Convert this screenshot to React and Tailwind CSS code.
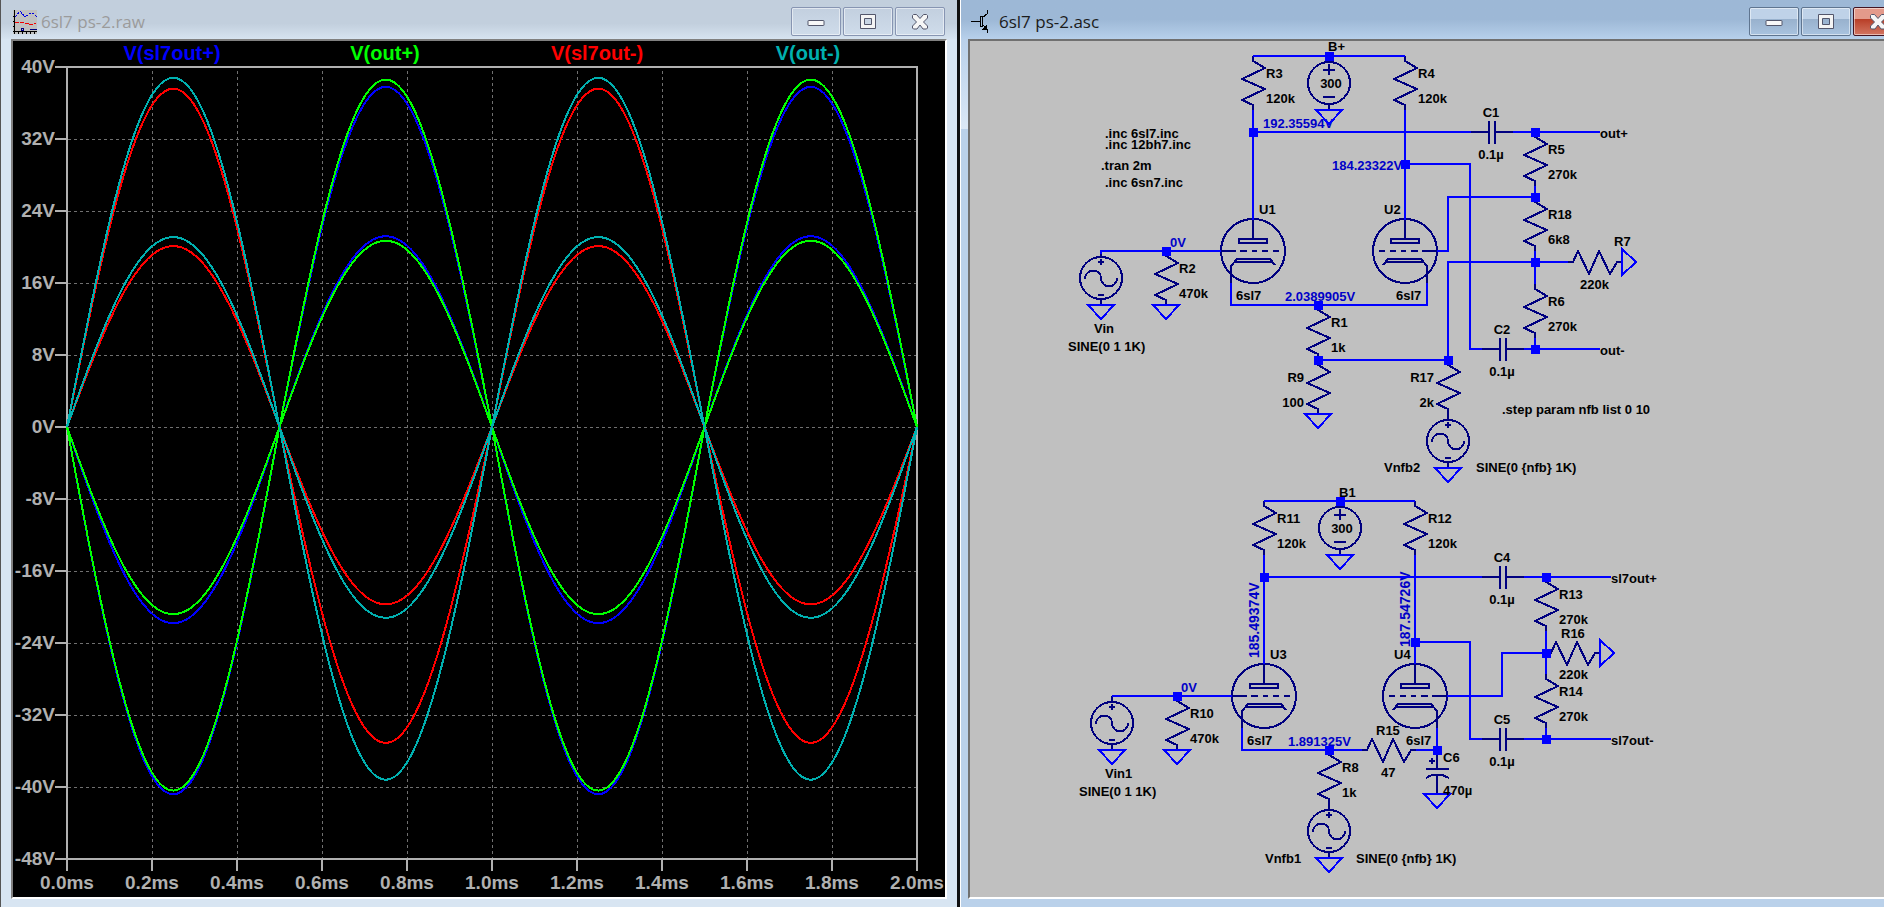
import { clsx } from 'clsx';

const WIRE = '#0000ff';
const SYMBOL = '#000080';
const VOLTAGE = '#0000c8';

// ---------- waveform data ----------
// each trace has one curve per step of the nfb parameter: [first peak, second peak] in volts
const traces = [
  { name: 'V(sl7out+)', x: 172, color: '#0000ff', curves: [[-40.8, 37.8], [-21.8, 21.2]] },
  { name: 'V(out+)', x: 385, color: '#00ff00', curves: [[-40.4, 38.6], [-20.8, 20.7]] },
  { name: 'V(sl7out-)', x: 597, color: '#ff0000', curves: [[37.6, -35.1], [20.1, -19.7]] },
  { name: 'V(out-)', x: 808, color: '#00b0b0', curves: [[38.8, -39.2], [21.1, -21.2]] },
];

const volts = [40, 32, 24, 16, 8, 0, -8, -16, -24, -32, -40, -48];
const times = [0, 0.2, 0.4, 0.6, 0.8, 1.0, 1.2, 1.4, 1.6, 1.8, 2.0];

const tx = (t) => Math.round(67 + t * 425);
const vy = (v) => 427 - v * 9;

const sinePoints = ([first, second]) => {
  const pts = [];
  for (let i = 0; i <= 200; i++) {
    const t = i / 100;
    const s = Math.sin(2 * Math.PI * t);
    const v = s >= 0 ? first * s : -second * s;
    pts.push(`${67 + t * 425},${vy(v).toFixed(1)}`);
  }
  return pts.join(' ');
};

// ---------- schematic data ----------
const wires = [
  // upper stage
  'M1253 56H1405', 'M1253 110V220', 'M1405 110V220', 'M1253 132H1471', 'M1513 132H1600',
  'M1405 164H1470V349H1482', 'M1524 349H1600', 'M1437 251H1448V197H1535', 'M1535 186V197',
  'M1535 251V284', 'M1535 338V349', 'M1568 262H1448V360H1318', 'M1101 251H1221',
  'M1231 283V305H1427V283', 'M1101 250V254',
  // lower stage
  'M1264 501H1415', 'M1264 555V664', 'M1415 555V664', 'M1264 577H1482', 'M1524 577H1611',
  'M1415 642H1470V739H1482', 'M1524 739H1611', 'M1447 696H1502V653H1546', 'M1546 631V674',
  'M1546 728V739', 'M1112 696H1232', 'M1242 728V750H1362', 'M1416 750H1437V728',
];

const nodes = [
  [1329, 56], [1253, 132], [1405, 164], [1535, 132], [1535, 197], [1535, 262], [1535, 349],
  [1448, 360], [1318, 305], [1318, 360], [1166, 251],
  [1340, 501], [1264, 577], [1415, 642], [1546, 577], [1546, 653], [1546, 739],
  [1177, 696], [1329, 750], [1437, 750],
];

const resistors = [
  { x: 1253, y: 56, name: 'R3', value: '120k' },
  { x: 1405, y: 56, name: 'R4', value: '120k' },
  { x: 1535, y: 132, name: 'R5', value: '270k' },
  { x: 1535, y: 197, name: 'R18', value: '6k8' },
  { x: 1535, y: 284, name: 'R6', value: '270k' },
  { x: 1166, y: 251, name: 'R2', value: '470k' },
  { x: 1318, y: 305, name: 'R1', value: '1k' },
  { x: 1318, y: 360, name: 'R9', value: '100', left: true },
  { x: 1448, y: 360, name: 'R17', value: '2k', left: true },
  { x: 1264, y: 501, name: 'R11', value: '120k' },
  { x: 1415, y: 501, name: 'R12', value: '120k' },
  { x: 1546, y: 577, name: 'R13', value: '270k' },
  { x: 1546, y: 674, name: 'R14', value: '270k' },
  { x: 1177, y: 696, name: 'R10', value: '470k' },
  { x: 1329, y: 750, name: 'R8', value: '1k' },
];

const flatResistors = [[1622, 262], [1600, 653], [1416, 750]];

const capacitors = [
  { x: 1492, y: 132, name: 'C1' },
  { x: 1503, y: 349, name: 'C2' },
  { x: 1503, y: 577, name: 'C4' },
  { x: 1503, y: 739, name: 'C5' },
];

const tubes = [
  { x: 1253, y: 251, name: 'U1' },
  { x: 1405, y: 251, name: 'U2', flip: true },
  { x: 1264, y: 696, name: 'U3' },
  { x: 1415, y: 696, name: 'U4', flip: true },
];

const sources = [[1101, 251], [1448, 414], [1112, 696], [1329, 804]];
const batteries = [[1329, 56], [1340, 501]];
const grounds = [
  [1101, 305], [1166, 305], [1329, 110], [1318, 414], [1448, 468],
  [1340, 555], [1112, 750], [1177, 750], [1329, 858], [1437, 794],
];

const voltages = [
  [1263, 128, '192.35594V'], [1332, 170, '184.23322V'], [1170, 247, '0V'],
  [1285, 301, '2.0389905V'], [1181, 692, '0V'], [1288, 746, '1.891325V'],
];

const labels = [
  [1328, 51, 'B+'], [1339, 497, 'B1'],
  [1614, 246, 'R7'], [1580, 289, '220k'],
  [1561, 638, 'R16'], [1559, 679, '220k'],
  [1376, 735, 'R15'], [1381, 777, '47'],
  [1443, 762, 'C6'], [1443, 795, '470µ'],
  [1600, 138, 'out+'], [1600, 355, 'out-'],
  [1611, 583, 'sl7out+'], [1611, 745, 'sl7out-'],
  [1094, 333, 'Vin'], [1068, 351, 'SINE(0 1 1K)'],
  [1105, 778, 'Vin1'], [1079, 796, 'SINE(0 1 1K)'],
  [1384, 472, 'Vnfb2'], [1476, 472, 'SINE(0 {nfb} 1K)'],
  [1265, 863, 'Vnfb1'], [1356, 863, 'SINE(0 {nfb} 1K)'],
  [1105, 138, '.inc 6sl7.inc'], [1105, 149, '.inc 12bh7.inc'],
  [1101, 170, '.tran 2m'], [1105, 187, '.inc 6sn7.inc'],
  [1502, 414, '.step param nfb list 0 10'],
];

// ---------- window chrome ----------
const MinimizeGlyph = () => (
  <svg width="18" height="18" viewBox="0 0 18 18" aria-hidden="true">
    <rect x="1" y="7.5" width="16" height="5" rx="0.5" fill="#f8f8f8" stroke="#53566b" />
  </svg>
);

const MaximizeGlyph = () => (
  <svg width="18" height="18" viewBox="0 0 18 18" aria-hidden="true">
    <path d="M1.5 1.5h15v14h-15z M5.5 5.5v6h7v-6z" fill="#f4f4f4" fillRule="evenodd" stroke="#53566b" />
  </svg>
);

const CloseGlyph = () => (
  <svg width="18" height="18" viewBox="0 0 18 18" aria-hidden="true">
    <path
      d="M2.500 1.500h3l3.500 4 3.500-4h3l1 1v2.500l-4 4 4 4v2l-1 1h-3.500l-3-4-3 4h-3.500l-1-1v-2l4-4-4-4v-2.500z"
      fill="#f6f6f6"
      stroke="#53566b"
    />
  </svg>
);

const WindowButton = ({ label, active, danger, children }) => (
  <button
    type="button"
    aria-label={label}
    className={clsx(
      'flex h-[29px] w-[50px] shrink-0 items-center justify-center rounded-xs border inset-ring inset-ring-white/50',
      !active && 'border-[#8795b2] bg-linear-to-b from-[#c2cfdf] to-[#cfdcea]',
      active && !danger && 'border-[#5f7590] bg-linear-to-b from-[#bfd2e8] from-40% via-[#98b1cd] via-41% to-[#a9c3df]',
      active && danger && 'border-[#431422] bg-linear-to-b from-[#e39a8b] from-40% via-[#b83d26] via-41% to-[#d27561]'
    )}
  >
    {children}
  </button>
);

const WindowButtons = ({ active }) => (
  <div className={clsx('ml-auto flex gap-[2px] pt-[7px]', active ? '-mr-[19px]' : 'mr-[12px]')}>
    <WindowButton label="Minimize" active={active}><MinimizeGlyph /></WindowButton>
    <WindowButton label="Maximize" active={active}><MaximizeGlyph /></WindowButton>
    <WindowButton label="Close" active={active} danger><CloseGlyph /></WindowButton>
  </div>
);

const PlotIcon = () => (
  <svg width="24" height="24" viewBox="0 0 24 24" shapeRendering="crispEdges" fill="none" aria-hidden="true">
    <rect width="24" height="24" fill="#c0c0c0" />
    <path d="M2 7l2-2 3-4 5 6 5-4h3l4 4" stroke="#0000e0" strokeDasharray="3 1" />
    <path d="M2 12h5l4 1h3l4 2 5-2" stroke="#f00000" strokeDasharray="4 1" />
    <path d="M8 20v-2h2v2zM17 19.500h7" stroke="#000080" />
    <path d="M1.500 0v24M0 21.500h24M5.500 22v2M9.500 22v2M13.500 22v2M17.500 22v2M21.500 22v2M0 6.500h1M0 11.500h1M0 16.500h1" stroke="#000" />
  </svg>
);

const TransistorIcon = () => (
  <svg width="24" height="24" viewBox="0 0 24 24" shapeRendering="crispEdges" fill="none" stroke="#000" aria-hidden="true">
    <path d="M0 11.500h10M9.500 6.500h2v10h-2zM16.500 0v4M16.500 19v4" />
    <path d="M11.500 7.500l5-4M11.500 14.500l5 5" />
    <path d="M16 15v5h-5v-1z" fill="#000" stroke="none" />
  </svg>
);

// ---------- waveform plot ----------
const WaveformPlot = () => (
  <svg
    viewBox="13 41 932 856"
    className="block h-full w-full bg-black font-['Liberation_Sans',Arial,sans-serif] text-[19px] font-bold"
    role="img"
    aria-label="Output voltages over time"
  >
    <g shapeRendering="crispEdges" fill="none">
      <g stroke="#707070" strokeDasharray="3 3">
        {times.slice(1, -1).map((t) => (
          <line key={t} x1={tx(t) + 0.5} x2={tx(t) + 0.5} y1="71" y2="858" />
        ))}
        {volts.slice(1, -1).map((v) => (
          <line key={v} x1="68" x2="916" y1={vy(v) + 0.5} y2={vy(v) + 0.5} />
        ))}
      </g>
      <g stroke="#b0b0b0" strokeWidth="2">
        <rect x="67" y="67" width="850" height="792" />
        {times.map((t) => (
          <line key={t} x1={tx(t)} x2={tx(t)} y1="859" y2="871" />
        ))}
        {volts.map((v) => (
          <line key={v} x1="55" x2="67" y1={vy(v)} y2={vy(v)} />
        ))}
      </g>
      {traces.map((trace) =>
        trace.curves.map((curve) => (
          <polyline key={`${trace.name}${curve[0]}`} points={sinePoints(curve)} stroke={trace.color} strokeWidth="2" />
        ))
      )}
    </g>
    <g fill="#b0b0b0">
      {volts.map((v) => (
        <text key={v} x="55" y={vy(v) + 6} textAnchor="end">{v}V</text>
      ))}
      {times.map((t) => (
        <text key={t} x={tx(t)} y="889" textAnchor="middle">{t.toFixed(1)}ms</text>
      ))}
    </g>
    {traces.map((trace) => (
      <text key={trace.name} x={trace.x} y="60" textAnchor="middle" className="text-[20px]" fill={trace.color}>
        {trace.name}
      </text>
    ))}
  </svg>
);

// ---------- schematic symbols ----------
const Resistor = ({ x, y, flat }) => (
  <polyline
    points="0,0 0,5 12,12 -11,23 12,33 -11,44 0,49 0,54"
    transform={`translate(${x} ${y})${flat ? ' rotate(90)' : ''}`}
  />
);

const Capacitor = ({ x, y }) => (
  <path d="M-21 0H-3M-3 -11V12M3 -11V12M3 0H21" transform={`translate(${x} ${y})`} />
);

const Tube = ({ x, y, flip }) => (
  <g transform={`translate(${x} ${y})${flip ? ' scale(-1 1)' : ''}`}>
    <circle r="32" />
    <path d="M0 -32V-12M-14 -12H14V-8H-14Z" />
    <path d="M-32 0H-17M-13 0h7M-1 0h5M9 0h6M20 0h6" />
    <path d="M-22 32V15L-16 8H17L22 14M-18 11H19" />
  </g>
);

const SineSource = ({ x, y }) => (
  <g transform={`translate(${x} ${y})`}>
    <circle cy="27" r="21" />
    <path d="M0 0V6M0 8V14M-3 11H3M-3 44H3M0 48V54" />
    <path d="M-16 28C-16 17 0 17 0 27C0 38 16 38 16 27" />
  </g>
);

const Battery = ({ x, y }) => (
  <g transform={`translate(${x} ${y})`}>
    <circle cy="27" r="21" />
    <path d="M0 0V6M0 8V19M-6 14H6M-6 41H6M0 48V54" />
  </g>
);

const Ground = ({ x, y, right }) => (
  <path d="M-13 0H13L0 14Z" transform={`translate(${x} ${y})${right ? ' rotate(-90)' : ''}`} />
);

const Schematic = () => (
  <svg
    viewBox="970 41 914 856"
    className="block h-full w-full bg-[#c0c0c0] font-['Liberation_Sans',Arial,sans-serif] text-[13px] font-bold"
    role="img"
    aria-label="6sl7 phase splitter schematic"
  >
    <g fill={VOLTAGE}>
      {voltages.map(([x, y, text]) => (
        <text key={`${x}-${y}`} x={x} y={y}>{text}</text>
      ))}
      <g className="text-[14px]">
        <text transform="translate(1259 658) rotate(-90)">185.49374V</text>
        <text transform="translate(1410 647) rotate(-90)">187.54726V</text>
      </g>
    </g>
    <g shapeRendering="crispEdges" fill="none" strokeWidth="2">
      <g stroke={SYMBOL}>
        {resistors.map((r) => <Resistor key={r.name} x={r.x} y={r.y} />)}
        {flatResistors.map(([x, y]) => <Resistor key={x} x={x} y={y} flat />)}
        {capacitors.map((c) => <Capacitor key={c.name} x={c.x} y={c.y} />)}
        {tubes.map((t) => <Tube key={t.name} x={t.x} y={t.y} flip={t.flip} />)}
        {sources.map(([x, y]) => <SineSource key={`${x}-${y}`} x={x} y={y} />)}
        {batteries.map(([x, y]) => <Battery key={y} x={x} y={y} />)}
        {/* C6, polarised */}
        <path d="M1437 750V769M1426 769H1449M1426 778Q1437 771 1449 778M1437 775V794M1429 761H1435M1432 758V764" />
      </g>
      <g stroke={WIRE}>
        {wires.map((d) => <path key={d} d={d} />)}
        {grounds.map(([x, y]) => <Ground key={`${x}-${y}`} x={x} y={y} />)}
        <Ground x={1622} y={262} right />
        <Ground x={1600} y={653} right />
      </g>
      <g fill={WIRE} stroke="none">
        {nodes.map(([x, y]) => (
          <rect key={`${x}-${y}`} x={x - 4} y={y - 4} width="9" height="9" />
        ))}
      </g>
    </g>
    <g fill="#000">
      {resistors.map((r) => (
        <g key={r.name} textAnchor={r.left ? 'end' : 'start'}>
          <text x={r.left ? r.x - 14 : r.x + 13} y={r.y + 22}>{r.name}</text>
          <text x={r.left ? r.x - 14 : r.x + 13} y={r.y + 47}>{r.value}</text>
        </g>
      ))}
      {capacitors.map((c) => (
        <g key={c.name} textAnchor="middle">
          <text x={c.x - 1} y={c.y - 15}>{c.name}</text>
          <text x={c.x - 1} y={c.y + 27}>0.1µ</text>
        </g>
      ))}
      {tubes.map((t) => (
        <g key={t.name}>
          <text x={t.flip ? t.x - 21 : t.x + 6} y={t.y - 37}>{t.name}</text>
          <text x={t.flip ? t.x - 9 : t.x - 17} y={t.y + 49}>6sl7</text>
        </g>
      ))}
      {batteries.map(([x, y]) => (
        <text key={y} x={x + 2} y={y + 32} textAnchor="middle">300</text>
      ))}
      {labels.map(([x, y, text]) => (
        <text key={`${x}-${y}`} x={x} y={y}>{text}</text>
      ))}
    </g>
  </svg>
);

export default function App() {
  return (
    <main className="grid h-screen grid-cols-[960fr_924fr] overflow-hidden font-['Open_Sans','Noto_Sans',sans-serif]">
      {/* Waveform window */}
      <section className="flex min-w-0 flex-col overflow-hidden border-r-3 border-l border-r-[#101010] border-l-[#555] bg-[#d8e5f2]">
        <header className="flex h-[39px] shrink-0 bg-linear-to-b from-[#c2cfdd] from-60% to-[#d6e3f0]">
          <div className="flex items-center gap-1 pt-1 pl-3">
            <PlotIcon />
            <h1 className="text-[17px] leading-6 text-[#9b9b9b]">6sl7 ps-2.raw</h1>
          </div>
          <WindowButtons />
        </header>
        <div className="mr-[10px] mb-2 ml-[10px] min-h-0 flex-1 border-2 border-t-[#808080] border-r-white border-b-white border-l-[#808080]">
          <WaveformPlot />
        </div>
      </section>

      {/* Schematic window */}
      <section className="flex min-w-0 flex-col overflow-hidden border-l border-white bg-[#bad1ea]">
        <header className="flex h-[39px] shrink-0 bg-linear-to-b from-[#9db8d6] from-50% to-[#b7d0eb]">
          <div className="flex items-center gap-1 pt-1 pl-[10px]">
            <TransistorIcon />
            <h1 className="text-[17px] leading-6 text-[#1c1c1c]">6sl7 ps-2.asc</h1>
          </div>
          <WindowButtons active />
        </header>
        <div className="flex min-h-0 flex-1">
          <div className="h-[90px] w-[7px] shrink-0 bg-linear-to-b from-[#b9d0ea] to-[#dbe8f6]" />
          <div className="mb-2 min-w-0 flex-1 border-t-2 border-b-2 border-l-2 border-t-[#707070] border-b-white border-l-[#707070]">
            <Schematic />
          </div>
        </div>
      </section>
    </main>
  );
}
